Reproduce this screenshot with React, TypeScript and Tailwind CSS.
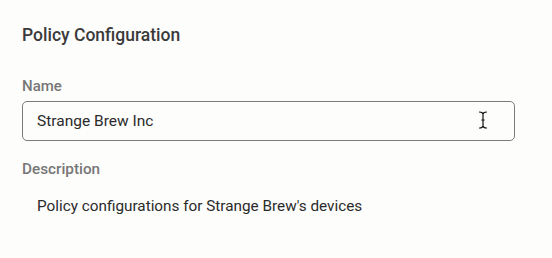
import React from "react";

export default function App() {
  return (
    <div
      className="relative w-[552px] h-[258px] bg-[#fdfdfc] pl-[22px] pr-[37px] pt-[23px]"
      style={{ fontFamily: "Roboto, 'Liberation Sans', sans-serif" }}
    >
      <h2 className="text-[17.5px] leading-[24px] font-medium text-[#3a3a3a]">
        Policy Configuration
      </h2>
      <div className="mt-[29px] text-[15px] leading-[20px] font-medium text-[#777777]">
        Name
      </div>
      <div className="relative mt-[5px] h-[40px] w-[493px] border border-[#7b7b7b] rounded-[5px] flex items-center px-[14px] text-[15.5px] leading-[20px] text-[#2b2b2b]">
        Strange Brew Inc
        <svg
          className="absolute left-[455px] top-[9px]"
          width="10"
          height="18"
          viewBox="0 0 10 18"
          fill="none"
        >
          <path
            d="M1.5 1 Q4.5 1 5 3 Q5.5 1 8.5 1 M5 3 V15 M1.5 17 Q4.5 17 5 15 Q5.5 17 8.5 17 M3.8 9 H6.2"
            stroke="#111"
            strokeWidth="1.2"
            strokeLinecap="round"
          />
        </svg>
      </div>
      <div className="mt-[18px] text-[15.3px] leading-[20px] font-medium text-[#777777]">
        Description
      </div>
      <p className="mt-[17px] pl-[15px] text-[15.3px] leading-[20px] text-[#2b2b2b]">
        Policy configurations for Strange Brew's devices
      </p>
    </div>
  );
}
